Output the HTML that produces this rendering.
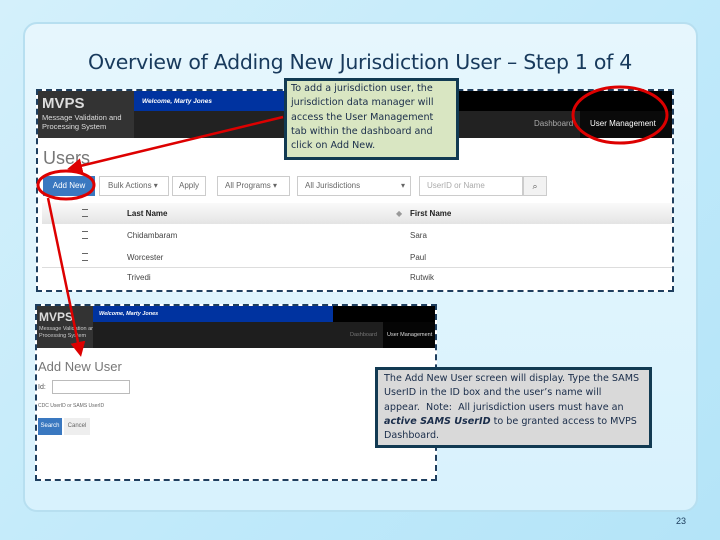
<!DOCTYPE html><html><head><style>
*{margin:0;padding:0;box-sizing:border-box}
body{width:720px;height:540px;overflow:hidden;position:relative;background:linear-gradient(135deg,#d4f0fb,#bfe9fa 60%,#b4e4f8);font-family:"Liberation Sans",sans-serif}
.card{position:absolute;left:23px;top:22px;width:675px;height:490px;border-radius:14px;background:linear-gradient(180deg,#e6f6fd,#d8f2fd);border:2px solid #b7dff0}
.title{position:absolute;left:0;width:720px;top:50px;text-align:center;font-family:"DejaVu Sans",sans-serif;font-size:20.5px;color:#183a5c;letter-spacing:-0.3px}
.a{position:absolute;white-space:nowrap}
.ss{position:absolute;background:#fff;border:2px dashed #1f3f5f;overflow:hidden}
.call{position:absolute;border:3px solid #123a52;font-family:"DejaVu Sans",sans-serif;font-size:9.6px;line-height:14.3px;color:#1a2d4a;padding:1px 4px}
.s{font-size:8px;color:#444;position:absolute}
</style></head><body>
<div class="card"></div>
<div class="title">Overview of Adding New Jurisdiction User – Step 1 of 4</div>

<div class="ss" style="left:36px;top:89px;width:638px;height:203px">
 <div class="a" style="left:0;top:0;width:96px;height:47px;background:#333"></div>
 <div class="a" style="left:4px;top:4px;color:#ddd;font-weight:bold;font-size:15px">MVPS</div>
 <div class="a" style="left:4px;top:22px;color:#ddd;font-size:7.5px;line-height:9px">Message Validation and<br>Processing System</div>
 <div class="a" style="left:96px;top:0;width:300px;height:20px;background:#0033a0"></div>
 <div class="a" style="left:396px;top:0;width:240px;height:20px;background:#000"></div>
 <div class="a" style="left:104px;top:7px;color:#fff;font-size:6.5px;font-style:italic;font-weight:bold">Welcome, Marty Jones</div>
 <div class="a" style="left:96px;top:20px;width:540px;height:27px;background:#222"></div>
 <div class="a" style="left:542px;top:20px;width:94px;height:27px;background:#0a0a0a"></div>
 <div class="a" style="left:496px;top:28px;color:#aaa;font-size:8px">Dashboard</div>
 <div class="a" style="left:552px;top:28px;color:#fff;font-size:8px">User Management</div>
 <div class="a" style="left:5px;top:57px;color:#777;font-size:18px">Users</div>
 <div class="a" style="left:5px;top:85px;width:52px;height:20px;background:#3a78c0;color:#fff;font-size:8px;line-height:20px;text-align:center">Add New</div>
 <div class="a" style="left:61px;top:85px;width:70px;height:20px;border:1px solid #ccc;font-size:8px;color:#666;line-height:18px;padding-left:8px">Bulk Actions ▾</div>
 <div class="a" style="left:134px;top:85px;width:34px;height:20px;border:1px solid #ccc;font-size:8px;color:#666;line-height:18px;padding-left:6px">Apply</div>
 <div class="a" style="left:179px;top:85px;width:73px;height:20px;border:1px solid #ccc;font-size:8px;color:#666;line-height:18px;padding-left:7px">All Programs ▾</div>
 <div class="a" style="left:259px;top:85px;width:114px;height:20px;border:1px solid #ccc;font-size:8px;color:#666;line-height:18px;padding-left:7px">All Jurisdictions <span style="float:right;margin-right:5px">▾</span></div>
 <div class="a" style="left:381px;top:85px;width:104px;height:20px;border:1px solid #ccc;font-size:8px;color:#aaa;line-height:18px;padding-left:7px">UserID or Name</div>
 <div class="a" style="left:485px;top:85px;width:24px;height:20px;border:1px solid #ccc;background:#f2f2f2;font-size:9px;text-align:center;line-height:18px;color:#555">⌕</div>
 <div class="a" style="left:4px;top:112px;width:630px;height:21px;background:linear-gradient(#fafafa,#e4e4e4)"></div>
 <div class="a" style="left:89px;top:118px;font-size:8px;font-weight:bold;color:#222">Last Name</div>
 <div class="a" style="left:358px;top:118px;font-size:8px;color:#999">◆</div>
 <div class="a" style="left:372px;top:118px;font-size:8px;font-weight:bold;color:#222">First Name</div>
 <div class="s" style="left:89px;top:140px">Chidambaram</div><div class="s" style="left:372px;top:140px">Sara</div>
 <div class="s" style="left:89px;top:162px">Worcester</div><div class="s" style="left:372px;top:162px">Paul</div>
 <div class="a" style="left:4px;top:176px;width:630px;height:1px;background:#ddd"></div>
 <div class="s" style="left:89px;top:182px">Trivedi</div><div class="s" style="left:372px;top:182px">Rutwik</div>
 <div class="a" style="left:44px;top:118px;width:6px;height:8px;border-top:1px solid #666;border-bottom:1px solid #666"></div>
 <div class="a" style="left:44px;top:140px;width:6px;height:8px;border-top:1px solid #666;border-bottom:1px solid #666"></div>
 <div class="a" style="left:44px;top:162px;width:6px;height:8px;border-top:1px solid #666;border-bottom:1px solid #666"></div>
</div>

<div class="ss" style="left:35px;top:304px;width:402px;height:177px">
 <div class="a" style="left:0;top:0;width:56px;height:42px;background:#333"></div>
 <div class="a" style="left:2px;top:4px;color:#ddd;font-weight:bold;font-size:12px">MVPS</div>
 <div class="a" style="left:2px;top:20px;color:#ccc;font-size:5.5px;line-height:7px">Message Validation and<br>Processing System</div>
 <div class="a" style="left:56px;top:0;width:240px;height:16px;background:#0033a0"></div>
 <div class="a" style="left:296px;top:0;width:104px;height:16px;background:#000"></div>
 <div class="a" style="left:62px;top:5px;color:#fff;font-size:5.5px;font-style:italic;font-weight:bold">Welcome, Marty Jones</div>
 <div class="a" style="left:56px;top:16px;width:344px;height:26px;background:#1e1e1e"></div>
 <div class="a" style="left:346px;top:16px;width:54px;height:26px;background:#050505"></div>
 <div class="a" style="left:313px;top:26px;color:#777;font-size:5.5px">Dashboard</div>
 <div class="a" style="left:350px;top:26px;color:#ddd;font-size:5.5px">User Management</div>
 <div class="a" style="left:1px;top:53px;color:#777;font-size:13px">Add New User</div>
 <div class="a" style="left:1px;top:78px;color:#555;font-size:7px">Id:</div>
 <div class="a" style="left:15px;top:74px;width:78px;height:14px;border:1px solid #bbb"></div>
 <div class="a" style="left:1px;top:97px;color:#666;font-size:5px">CDC UserID or SAMS UserID</div>
 <div class="a" style="left:1px;top:112px;width:24px;height:17px;background:#3a78c0;color:#fff;font-size:6px;line-height:17px;text-align:center">Search</div>
 <div class="a" style="left:27px;top:112px;width:26px;height:17px;background:#eee;color:#666;font-size:6px;line-height:17px;text-align:center">Cancel</div>
</div>

<div class="call" style="left:284px;top:78px;width:175px;height:82px;background:#d9e6c2">To add a jurisdiction user, the jurisdiction data manager will access the User Management tab within the dashboard and click on Add New.</div>
<div class="call" style="left:375px;top:367px;width:277px;height:81px;background:#d9d9d9;padding:2px 6px">The Add New User screen will display. Type the SAMS UserID in the ID box and the user’s name will appear.&nbsp; Note:&nbsp; All jurisdiction users must have an <b><i>active SAMS UserID</i></b> to be granted access to MVPS Dashboard.</div>

<svg class="a" style="left:0;top:0" width="720" height="540">
<defs><marker id="m" markerWidth="6" markerHeight="6" refX="4" refY="3" orient="auto"><path d="M0,0L6,3L0,6z" fill="#d00"/></marker></defs>
<line x1="283" y1="117" x2="72" y2="168" stroke="#d00" stroke-width="2.5" marker-end="url(#m)"/>
<line x1="48" y1="198" x2="80" y2="352" stroke="#d00" stroke-width="2.5" marker-end="url(#m)"/>
<ellipse cx="66" cy="185" rx="28" ry="14" fill="none" stroke="#d00" stroke-width="3"/>
<ellipse cx="620" cy="115" rx="47" ry="28" fill="none" stroke="#d00" stroke-width="3"/>
</svg>
<div class="a" style="left:676px;top:516px;font-size:9px;color:#1a3a5a">23</div>
</body></html>
